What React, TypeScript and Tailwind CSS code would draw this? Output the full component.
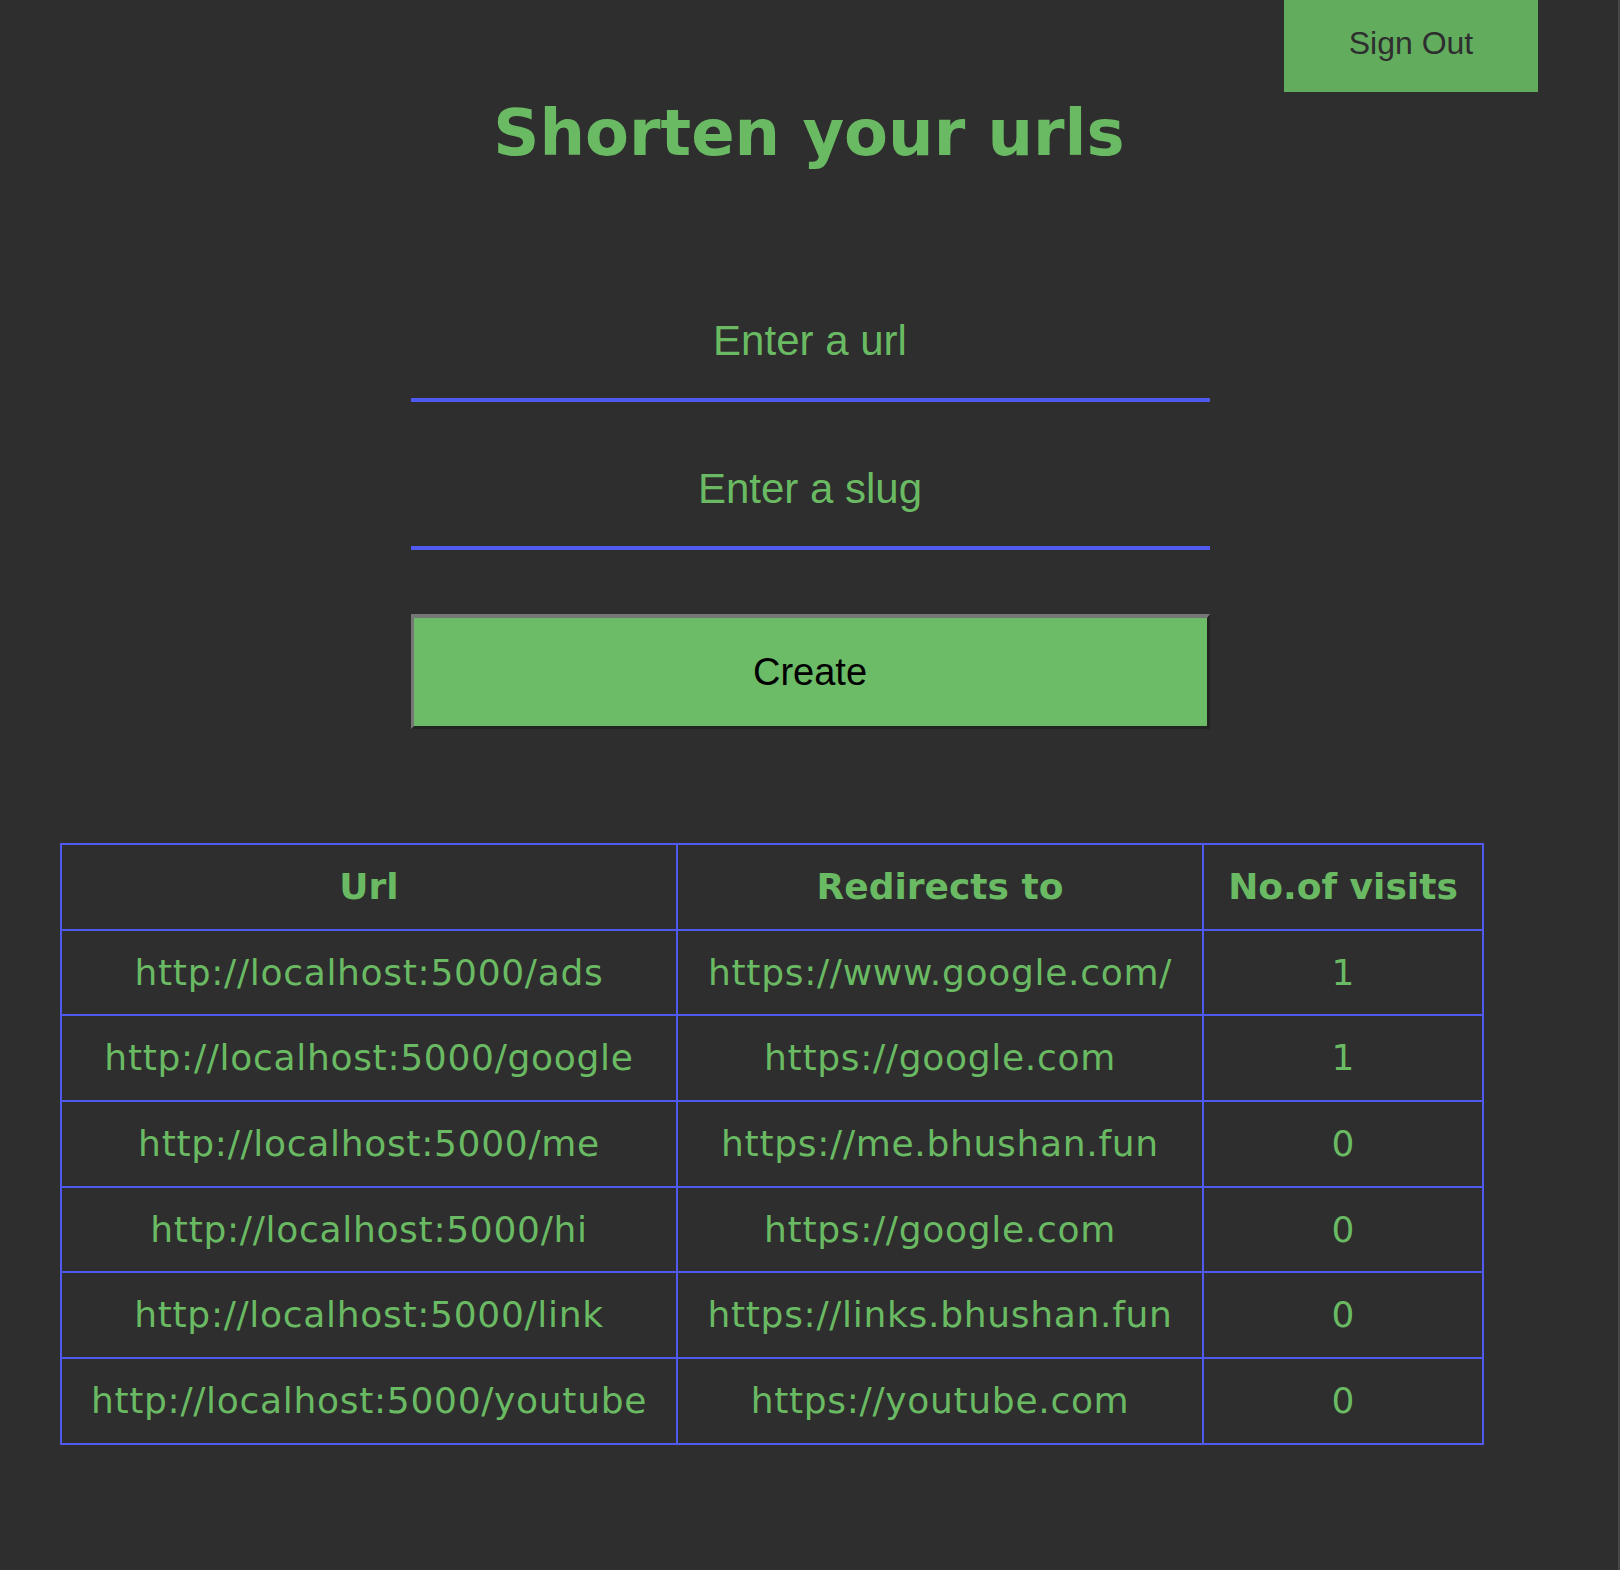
import React from "react";

const rows = [
  ["http://localhost:5000/ads", "https://www.google.com/", "1"],
  ["http://localhost:5000/google", "https://google.com", "1"],
  ["http://localhost:5000/me", "https://me.bhushan.fun", "0"],
  ["http://localhost:5000/hi", "https://google.com", "0"],
  ["http://localhost:5000/link", "https://links.bhushan.fun", "0"],
  ["http://localhost:5000/youtube", "https://youtube.com", "0"],
];

export default function App() {
  return (
    <div className="box-border min-h-[1570px] w-full bg-[#2e2e2e] border-r-2 border-[#474747]">
      <div className="flex justify-end pr-[80px]">
        <button
          className="h-[92px] w-[254px] bg-[#62ac5e] pt-[27px] text-[32px] leading-[32px] text-[#2e2e2e] flex justify-center items-start"
          style={{ fontFamily: '"Liberation Sans", Arial, sans-serif' }}
        >
          Sign Out
        </button>
      </div>
      <h1
        className="mt-[9px] text-center text-[64px] leading-[64px] font-bold text-[#6aba63]"
        style={{ fontFamily: '"DejaVu Sans", Verdana, sans-serif' }}
      >
        Shorten your urls
      </h1>
      <div
        className="mt-[119px] flex flex-col items-center"
        style={{ fontFamily: '"Liberation Sans", Arial, sans-serif' }}
      >
        <input
          placeholder="Enter a url"
          className="ml-[2px] box-border h-[118px] w-[799px] border-b-4 border-[#505af0] bg-transparent text-center text-[42px] text-[#6aba63] placeholder:text-[#6aba63] outline-none"
        />
        <input
          placeholder="Enter a slug"
          className="ml-[2px] mt-[30px] box-border h-[118px] w-[799px] border-b-4 border-[#505af0] bg-transparent text-center text-[42px] text-[#6aba63] placeholder:text-[#6aba63] outline-none"
        />
        <button className="ml-[2px] mt-[64px] box-border h-[115px] w-[799px] border-[3px] border-t-[4px] border-t-[#777777] border-l-[#777777] border-b-[#232323] border-r-[#232323] bg-[#6cbb66] text-[38px] text-black">
          Create
        </button>
      </div>
      <div className="mt-[114px] pl-[60px]">
        <table
          className="table-fixed border-collapse w-[1422px] text-[#6aba63] text-[36px]"
          style={{ fontFamily: '"DejaVu Sans", Verdana, sans-serif' }}
        >
          <colgroup>
            <col className="w-[616px]" />
            <col className="w-[526px]" />
            <col className="w-[280px]" />
          </colgroup>
          <thead>
            <tr className="h-[85.7px]">
              <th className="border-2 border-[#505af0] font-bold text-center p-0">Url</th>
              <th className="border-2 border-[#505af0] font-bold text-center p-0">Redirects to</th>
              <th className="border-2 border-[#505af0] font-bold text-center p-0">No.of visits</th>
            </tr>
          </thead>
          <tbody>
            {rows.map((r, i) => (
              <tr key={i} className="h-[85.7px]">
                <td className="border-2 border-[#505af0] text-center p-0 tracking-[0.7px]">{r[0]}</td>
                <td className="border-2 border-[#505af0] text-center p-0 tracking-[0.7px]">{r[1]}</td>
                <td className="border-2 border-[#505af0] text-center p-0">{r[2]}</td>
              </tr>
            ))}
          </tbody>
        </table>
      </div>
    </div>
  );
}
